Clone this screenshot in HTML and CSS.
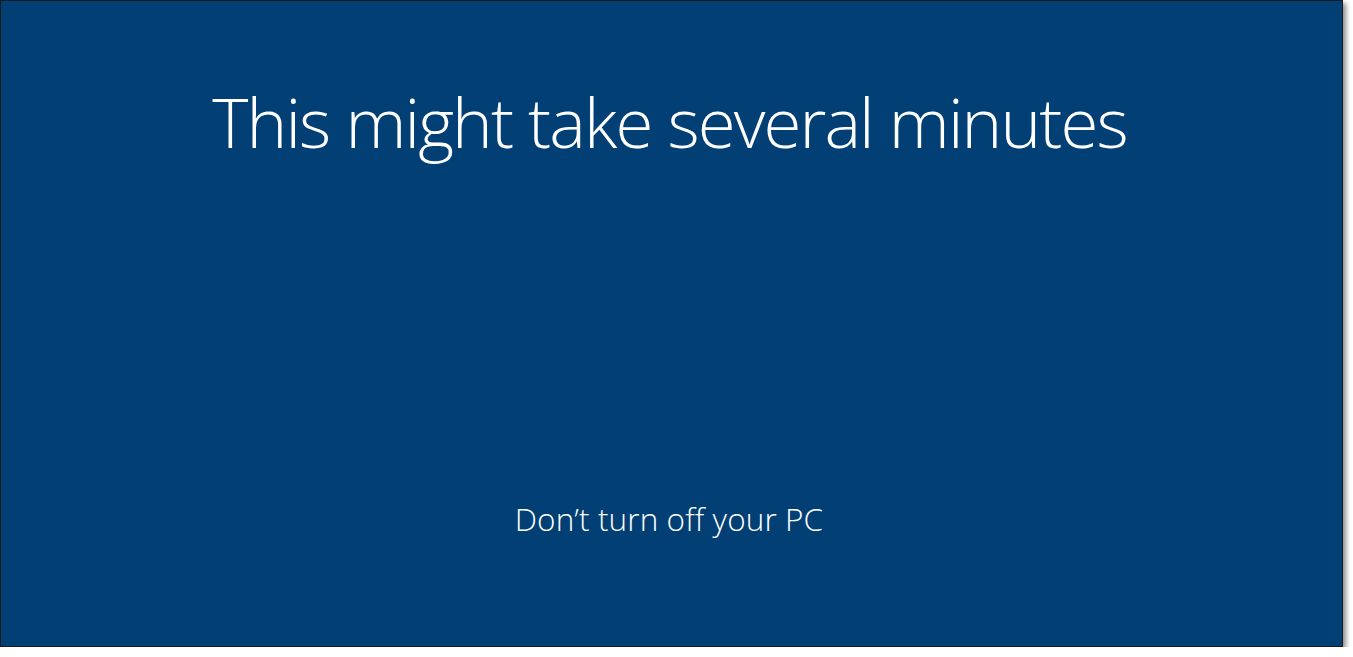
FILE: index.html
```html
<!DOCTYPE html>
<html lang="en">

<head>
    <meta charset="UTF-8" />
    <meta name="viewport" content="width=device-width, initial-scale=1.0" />
    <title>Setup</title>
    <link rel="stylesheet" href="styles.css">
</head>

<body>
    <div class="setup-screen">
        <h1 class="title">This might take several minutes</h1>
        <p class="note">Don’t turn off your PC</p>
    </div>
</body>

</html>
```
FILE: styles.css
```css
body {
    margin: 0;
    background-color: #ffffff;
    font-family: "Open Sans", "Noto Sans", sans-serif;
}

.setup-screen {
    width: 1341px;
    height: 645px;
    background-color: #013f75;
    border: 1px solid #1a1a1a;
    box-shadow: 3px 3px 5px rgba(0, 0, 0, 0.45);
    display: flex;
    flex-direction: column;
    align-items: center;
    color: #ffffff;
}

.title {
    margin: 80px 0 0 -4px;
    font-size: 69px;
    font-weight: 300;
    line-height: 80px;
    letter-spacing: -1.9px;
}

.note {
    margin: auto 0 107px -5px;
    font-size: 31.5px;
    font-weight: 300;
    line-height: 40px;
    letter-spacing: 0.1px;
}
```
